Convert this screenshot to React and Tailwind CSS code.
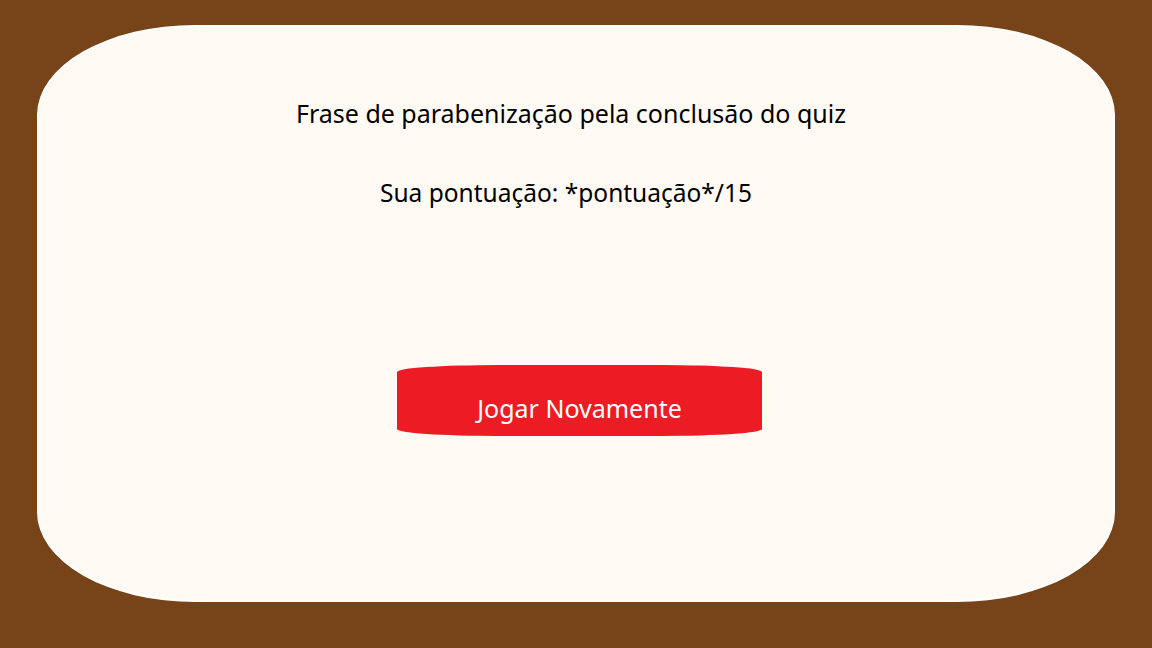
export default function App() {
  return (
    <div className="w-[1152px] h-[648px] bg-[#774318] pt-[25px] pl-[37px] pr-[37px] pb-[46px] font-['Noto_Sans',sans-serif]">
      <div className="w-full h-full bg-[#fffaf4] border-2 border-white rounded-[158px/90px] flex flex-col items-center pt-[70px]">
        <p className="mr-[10px] text-[25px] leading-[32px] text-black">Frase de parabenização pela conclusão do quiz</p>
        <p className="mt-[48px] mr-[20px] text-[24.5px] leading-[32px] text-black">Sua pontuação: *pontuação*/15</p>
        <button className="mt-[156px] ml-[7px] w-[365px] h-[71px] bg-[#ed1c24] rounded-[100px/7px] text-white text-[25px] leading-[32px] pt-[14px]">
          Jogar Novamente
        </button>
      </div>
    </div>
  );
}
